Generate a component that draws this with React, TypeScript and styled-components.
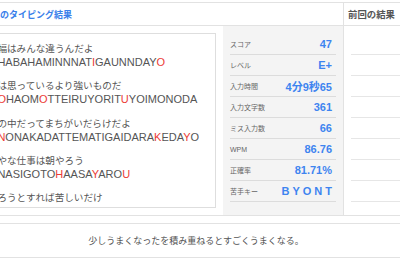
import React from "react";
import styled, { createGlobalStyle } from "styled-components";

const GlobalStyle = createGlobalStyle`
  html, body {
    margin: 0;
    padding: 0;
    background: #ffffff;
    overflow: hidden;
  }
  body {
    font-family: "Liberation Sans", "Noto Sans CJK JP", sans-serif;
    color: #555555;
  }
`;

const Page = styled.div`
  width: 432px;
  margin-left: -20px;
  padding-top: 2px;
  display: flex;
  flex-direction: column;
  gap: 7px;
`;

const Card = styled.div`
  display: grid;
  grid-template-columns: 363px 1fr;
  border: 1px solid #e2e2e2;
`;

const Section = styled.section<{ $divider?: boolean }>`
  display: flex;
  flex-direction: column;
  border-right: ${(p) => (p.$divider ? "1px solid #e2e2e2" : "none")};
  min-width: 0;
`;

const Header = styled.h2<{ $tone: "blue" | "gray"; $pad: number }>`
  margin: 0;
  height: 22px;
  border-bottom: 1px solid #e2e2e2;
  display: flex;
  align-items: center;
  padding-left: ${(p) => p.$pad}px;
  font-family: "Noto Sans CJK JP", sans-serif;
  font-size: ${(p) => (p.$tone === "blue" ? "9px" : "9.4px")};
  font-weight: 700;
  color: ${(p) => (p.$tone === "blue" ? "#3a80ea" : "#555555")};
  white-space: nowrap;
`;

const ResultBody = styled.div`
  display: grid;
  grid-template-columns: 242px 120px;
`;

const TextColumn = styled.div`
  padding: 7px;
`;

const SentenceBox = styled.div`
  box-sizing: border-box;
  height: 175px;
  border: 1px solid #dedede;
  background: #ffffff;
  padding: 7px 0 0 8.4px;
  overflow: hidden;
`;

const Sentence = styled.div`
  margin-bottom: 9.3px;
`;

const KanaLine = styled.div`
  font-family: "Noto Sans CJK JP", sans-serif;
  font-size: 9.6px;
  line-height: 14px;
  color: #555555;
  white-space: nowrap;
`;

const RomajiLine = styled.div`
  font-family: "Liberation Sans", sans-serif;
  font-size: 11px;
  line-height: 14px;
  color: #555555;
  white-space: nowrap;
`;

const Miss = styled.span`
  color: #ec3b35;
`;

const StatsPanel = styled.div`
  background: #f4f4f4;
  padding: 8px 7px 0;
`;

const StatRow = styled.div`
  box-sizing: border-box;
  height: 21px;
  border-bottom: 1px solid #dcdcdc;
  display: flex;
  align-items: center;
  justify-content: space-between;
  padding-right: 4px;
`;

const StatLabel = styled.span`
  font-family: "Liberation Sans", "Noto Sans CJK JP", sans-serif;
  font-size: 7px;
  color: #666666;
`;

const StatValue = styled.span<{ $spaced?: boolean }>`
  font-family: "Liberation Sans", "Noto Sans CJK JP", sans-serif;
  font-size: 11px;
  font-weight: 700;
  color: #3e84f0;
  letter-spacing: ${(p) => (p.$spaced ? "3px" : "0")};
  margin-right: ${(p) => (p.$spaced ? "-3px" : "0")};
`;

const PrevBody = styled.div`
  padding: 8px 0 0 7px;
`;

const PrevRow = styled.div`
  box-sizing: border-box;
  height: 21px;
  border-bottom: 1px solid #e6e6e6;
`;

const Message = styled.p`
  margin: 0;
  height: 33px;
  border-top: 1px solid #e2e2e2;
  border-bottom: 1px solid #e2e2e2;
  display: flex;
  align-items: center;
  justify-content: center;
  font-family: "Noto Sans CJK JP", sans-serif;
  font-size: 9px;
  color: #555555;
`;

type SentenceData = { kana: string; romaji: string };

const sentences: SentenceData[] = [
  { kana: "幅はみんな違うんだよ", romaji: "HABAHAMINNNAT[I]GAUNNDAY[O]" },
  { kana: "は思っているより強いものだ", romaji: "[O]HAOM[O]TTEIRUYORIT[U]YOIMONODA" },
  { kana: "の中だってまちがいだらけだよ", romaji: "[N]ONAKADATTEMATIGAIDARA[K]EDA[Y]O" },
  { kana: "やな仕事は朝やろう", romaji: "NASIGOTO[H]AASA[Y]ARO[U]" },
  { kana: "ろうとすれば苦しいだけ", romaji: "ROUTOSUREBAKURUSIIDAKE" },
];

const stats: { label: string; value: string; spaced?: boolean }[] = [
  { label: "スコア", value: "47" },
  { label: "レベル", value: "E+" },
  { label: "入力時間", value: "4分9秒65" },
  { label: "入力文字数", value: "361" },
  { label: "ミス入力数", value: "66" },
  { label: "WPM", value: "86.76" },
  { label: "正確率", value: "81.71%" },
  { label: "苦手キー", value: "BYONT", spaced: true },
];

function renderRomaji(src: string) {
  const parts: React.ReactNode[] = [];
  const re = /\[([^\]]+)\]/g;
  let last = 0;
  let m: RegExpExecArray | null;
  let k = 0;
  while ((m = re.exec(src))) {
    if (m.index > last) parts.push(src.slice(last, m.index));
    parts.push(<Miss key={k++}>{m[1]}</Miss>);
    last = m.index + m[0].length;
  }
  if (last < src.length) parts.push(src.slice(last));
  return parts;
}

export default function App() {
  return (
    <>
      <GlobalStyle />
      <Page>
        <Card>
          <Section $divider>
            <Header $tone="blue" $pad={19}>
              のタイピング結果
            </Header>
            <ResultBody>
              <TextColumn>
                <SentenceBox>
                  {sentences.map((s, i) => (
                    <Sentence key={i}>
                      <KanaLine>{s.kana}</KanaLine>
                      <RomajiLine>{renderRomaji(s.romaji)}</RomajiLine>
                    </Sentence>
                  ))}
                </SentenceBox>
              </TextColumn>
              <StatsPanel>
                {stats.map((s) => (
                  <StatRow key={s.label}>
                    <StatLabel>{s.label}</StatLabel>
                    <StatValue $spaced={s.spaced}>{s.value}</StatValue>
                  </StatRow>
                ))}
              </StatsPanel>
            </ResultBody>
          </Section>
          <Section>
            <Header $tone="gray" $pad={4}>
              前回の結果
            </Header>
            <PrevBody>
              {stats.map((s) => (
                <PrevRow key={s.label} />
              ))}
            </PrevBody>
          </Section>
        </Card>
        <Message>少しうまくなったを積み重ねるとすごくうまくなる。</Message>
      </Page>
    </>
  );
}
